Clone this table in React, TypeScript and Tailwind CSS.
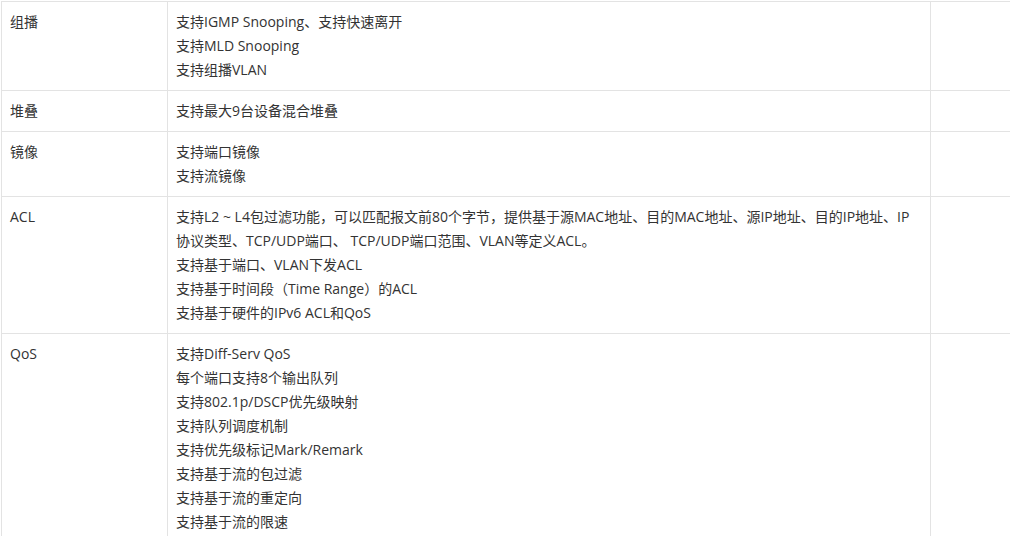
const rows: { name: string; lines: string[] }[] = [
  {
    name: "组播",
    lines: ["支持IGMP Snooping、支持快速离开", "支持MLD Snooping", "支持组播VLAN"],
  },
  { name: "堆叠", lines: ["支持最大9台设备混合堆叠"] },
  { name: "镜像", lines: ["支持端口镜像", "支持流镜像"] },
  {
    name: "ACL",
    lines: [
      "支持L2 ~ L4包过滤功能，可以匹配报文前80个字节，提供基于源MAC地址、目的MAC地址、源IP地址、目的IP地址、IP协议类型、TCP/UDP端口、 TCP/UDP端口范围、VLAN等定义ACL。",
      "支持基于端口、VLAN下发ACL",
      "支持基于时间段（Time Range）的ACL",
      "支持基于硬件的IPv6 ACL和QoS",
    ],
  },
  {
    name: "QoS",
    lines: [
      "支持Diff-Serv QoS",
      "每个端口支持8个输出队列",
      "支持802.1p/DSCP优先级映射",
      "支持队列调度机制",
      "支持优先级标记Mark/Remark",
      "支持基于流的包过滤",
      "支持基于流的重定向",
      "支持基于流的限速",
    ],
  },
];

export default function App() {
  return (
    <div className="h-[536px] w-[1010px] overflow-hidden bg-white pl-px pt-px font-['Open_Sans','Noto_Sans_CJK_SC',sans-serif] text-sm leading-6 text-[#333]">
      <table className="w-[1100px] table-fixed border-collapse">
        <colgroup>
          <col className="w-[166px]" />
          <col className="w-[763px]" />
          <col />
        </colgroup>
        <tbody>
          {rows.map((r) => (
            <tr key={r.name}>
              <td className="border border-[#e3e3e3] px-2 py-2 align-top">{r.name}</td>
              <td className="border border-[#e3e3e3] px-2 py-2 align-top">
                {r.lines.map((l) => (
                  <p key={l}>{l}</p>
                ))}
              </td>
              <td className="border border-[#e3e3e3] px-2 py-2 align-top"></td>
            </tr>
          ))}
        </tbody>
      </table>
    </div>
  );
}
